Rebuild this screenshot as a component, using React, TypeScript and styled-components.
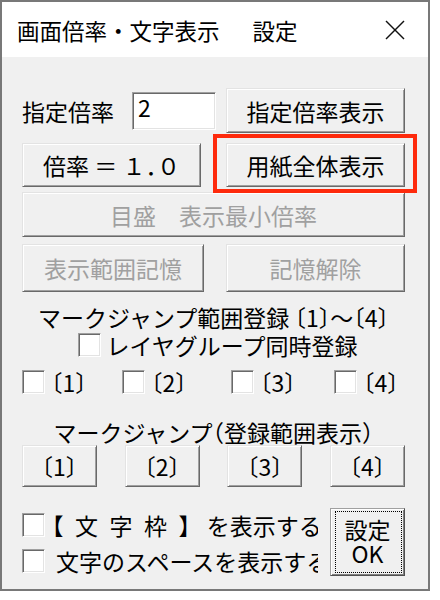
import styled, { createGlobalStyle } from 'styled-components';

const GlobalStyle = createGlobalStyle`
  html, body {
    margin: 0;
    padding: 0;
    background: #ffffff;
  }
  body {
    font-family: "Noto Sans CJK JP", "Noto Sans", sans-serif;
    font-feature-settings: "halt";
    color: #000000;
  }
`;

export default function App() {
    return (
        <>
            <GlobalStyle/>
            <Window>
                <TitleBar>
                    <TitleText>画面倍率・文字表示<TitleSuffix>設定</TitleSuffix></TitleText>
                    <CloseIcon viewBox="0 0 20 20">
                        <line x1="1" y1="1" x2="19" y2="19"/>
                        <line x1="19" y1="1" x2="1" y2="19"/>
                    </CloseIcon>
                </TitleBar>
                <Body>
                    <Row $top={31}>
                        <FieldLabel>指定倍率</FieldLabel>
                        <RateInput defaultValue="2"/>
                        <Button $w={179} $h={45} style={{marginLeft: 'auto'}}>指定倍率表示</Button>
                    </Row>
                    <Row $top={10}>
                        <Button $w={179} $h={44}>倍率 ＝ １．０</Button>
                        <Highlight>
                            <Button $w={179} $h={44}>用紙全体表示</Button>
                        </Highlight>
                    </Row>
                    <Row $top={5}>
                        <Button $w={384} $h={45} disabled>目盛　表示最小倍率</Button>
                    </Row>
                    <Row $top={7}>
                        <Button $w={182} $h={48} disabled>表示範囲記憶</Button>
                        <Button $w={179} $h={48} disabled>記憶解除</Button>
                    </Row>

                    <Caption $top={14}>マークジャンプ範囲登録 〔1〕〜〔4〕</Caption>
                    <CenterLine $top={4}>
                        <Check $gap={6}>
                            <CheckBox/>
                            <CheckText>レイヤグループ同時登録</CheckText>
                        </Check>
                    </CenterLine>
                    <SlotRow $top={13}>
                        {['〔1〕', '〔2〕', '〔3〕', '〔4〕'].map((s) => (
                            <Check key={s} $gap={6}>
                                <CheckBox/>
                                <CheckText>{s}</CheckText>
                            </Check>
                        ))}
                    </SlotRow>

                    <Caption $top={27}>マークジャンプ（登録範囲表示）</Caption>
                    <Row $top={1}>
                        {['〔1〕', '〔2〕', '〔3〕', '〔4〕'].map((s) => (
                            <Button key={s} $w={75} $h={42}>{s}</Button>
                        ))}
                    </Row>

                    <Bottom>
                        <Options>
                            <Check $gap={7}>
                                <CheckBox/>
                                <CheckText>【&ensp;文&ensp;字&ensp;枠&ensp;】 &ensp;を表示する</CheckText>
                            </Check>
                            <Check $gap={11}>
                                <CheckBox/>
                                <CheckText>文字のスペースを表示する</CheckText>
                            </Check>
                        </Options>
                        <OkButton>
                            <OkLine>設定</OkLine>
                            <OkLine>OK</OkLine>
                        </OkButton>
                    </Bottom>
                </Body>
            </Window>
        </>
    );
}

const Window = styled.div`
    width: 430px;
    height: 591px;
    box-sizing: border-box;
    border: 2px solid #787878;
    background: #f0f0f0;
    display: flex;
    flex-direction: column;
`;

const TitleBar = styled.div`
    height: 55px;
    flex-shrink: 0;
    background: #ffffff;
    display: flex;
    align-items: center;
    justify-content: space-between;
    padding: 0 23px 0 15px;
`;

const TitleText = styled.div`
    font-size: 22.5px;
    line-height: 26px;
    font-feature-settings: normal;
    white-space: nowrap;
`;

const TitleSuffix = styled.span`
    margin-left: 33px;
`;

const CloseIcon = styled.svg`
    width: 20px;
    height: 20px;
    stroke: #111111;
    stroke-width: 1.4;
`;

const Body = styled.div`
    flex: 1;
    display: flex;
    flex-direction: column;
    padding: 0 23px 0 20px;
    font-size: 23px;
`;

const Row = styled.div<{ $top: number }>`
    display: flex;
    align-items: center;
    justify-content: space-between;
    margin-top: ${(p) => p.$top}px;
`;

const FieldLabel = styled.span`
    line-height: 26px;
    white-space: nowrap;
`;

const RateInput = styled.input`
    width: 84px;
    height: 38px;
    margin-left: 18px;
    box-sizing: border-box;
    border: 1px solid;
    border-color: #a0a0a0 #ffffff #ffffff #a0a0a0;
    box-shadow: inset 1px 1px #696969, inset -1px -1px #e3e3e3;
    background: #ffffff;
    padding: 0 4px 7px 5px;
    font: inherit;
    font-size: 23px;
    color: #000000;
    outline: none;
`;

const Button = styled.button<{ $w: number; $h: number }>`
    width: ${(p) => p.$w}px;
    height: ${(p) => p.$h}px;
    box-sizing: border-box;
    padding: 0;
    background: #f0f0f0;
    border: 1px solid;
    border-color: #e3e3e3 #696969 #696969 #e3e3e3;
    box-shadow: inset 1px 1px #ffffff, inset -1px -1px #a0a0a0;
    font: inherit;
    font-size: 23px;
    line-height: 26px;
    color: #000000;
    white-space: nowrap;

    &:disabled {
        color: #a0a0a0;
    }
`;

const Highlight = styled.div`
    position: relative;
    display: flex;

    &::after {
        content: "";
        position: absolute;
        top: -9px;
        left: -13px;
        right: -12px;
        bottom: -6px;
        border: 4px solid #fe2a0c;
        pointer-events: none;
    }
`;

const Caption = styled.div<{ $top: number }>`
    margin-top: ${(p) => p.$top}px;
    text-align: center;
    line-height: 23px;
    white-space: nowrap;
`;

const CenterLine = styled.div<{ $top: number }>`
    margin-top: ${(p) => p.$top}px;
    display: flex;
    justify-content: center;
    padding-left: 8px;
`;

const SlotRow = styled.div<{ $top: number }>`
    margin-top: ${(p) => p.$top}px;
    display: grid;
    grid-template-columns: 100px 109px 103px 1fr;
`;

const Check = styled.label<{ $gap: number }>`
    display: flex;
    align-items: center;
    gap: ${(p) => p.$gap}px;
    height: 24px;
    white-space: nowrap;
`;

const CheckBox = styled.span`
    width: 23px;
    height: 24px;
    flex-shrink: 0;
    box-sizing: border-box;
    background: #ffffff;
    border: 1px solid;
    border-color: #a0a0a0 #ffffff #ffffff #a0a0a0;
    box-shadow: inset 1px 1px #696969, inset -1px -1px #e3e3e3;
`;

const CheckText = styled.span`
    line-height: 24px;
`;

const Bottom = styled.div`
    margin-top: 21px;
    display: flex;
    justify-content: space-between;
`;

const Options = styled.div`
    width: 296px;
    overflow: hidden;
    display: flex;
    flex-direction: column;
    gap: 12px;
    padding-top: 5px;
`;

const OkButton = styled.button`
    position: relative;
    width: 75px;
    height: 68px;
    box-sizing: border-box;
    padding: 0 0 2px 0;
    background: #f0f0f0;
    border: 1px solid;
    border-color: #a0a0a0 #505050 #505050 #a0a0a0;
    box-shadow: inset 1px 1px #ffffff, inset -1px -1px #808080;
    display: flex;
    flex-direction: column;
    align-items: center;
    justify-content: center;
    font: inherit;
    font-size: 23px;
    color: #000000;

    &::after {
        content: "";
        position: absolute;
        top: 2px;
        left: 4px;
        right: 2px;
        bottom: 2px;
        border: 1px dotted #000000;
    }
`;

const OkLine = styled.span`
    display: block;
    line-height: 24px;
`;
